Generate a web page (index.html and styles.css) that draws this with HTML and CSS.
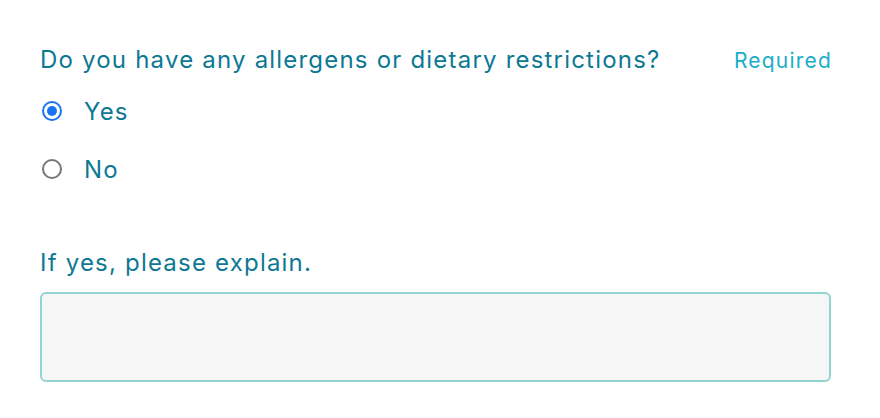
FILE: index.html
```html
<!DOCTYPE html>
<html>
<head>
<meta charset="utf-8">
<link rel="stylesheet" href="styles.css">
</head>
<body>
<form class="form">
  <div class="question">
    <div class="q-head">
      <span class="q-label">Do you have any allergens or dietary restrictions?</span>
      <span class="q-required">Required</span>
    </div>
    <div class="options">
      <label class="option"><span class="radio checked"></span><span class="opt-text">Yes</span></label>
      <label class="option"><span class="radio"></span><span class="opt-text">No</span></label>
    </div>
  </div>
  <div class="question explain">
    <div class="q-label">If yes, please explain.</div>
    <div class="textbox"></div>
  </div>
</form>
</body>
</html>
```
FILE: styles.css
```css
html, body {
  margin: 0;
  padding: 0;
  background: #ffffff;
}
body {
  font-family: Inter, "Open Sans", sans-serif;
  color: #0d7893;
}
.form {
  width: 791px;
  padding: 42px 0 0 40px;
}
.q-head {
  display: flex;
  justify-content: space-between;
  align-items: baseline;
}
.q-label {
  font-size: 24px;
  line-height: 36px;
  letter-spacing: 1.2px;
}
.q-required {
  font-size: 21px;
  letter-spacing: 1.2px;
  margin-right: -1px;
  color: #1aaec6;
}
.options {
  display: flex;
  flex-direction: column;
  gap: 22px;
  padding-top: 15px;
}
.option {
  display: flex;
  align-items: center;
  gap: 22px;
  height: 36px;
  font-size: 24px;
  letter-spacing: 1.2px;
}
.radio {
  width: 20px;
  height: 20px;
  box-sizing: border-box;
  border: 2px solid #767676;
  border-radius: 50%;
  margin-left: 2px;
  position: relative;
}
.radio.checked {
  border-color: #1a73f0;
}
.radio.checked::after {
  content: "";
  position: absolute;
  left: 3px;
  top: 3px;
  width: 10px;
  height: 10px;
  border-radius: 50%;
  background: #1a73f0;
}
.explain {
  margin-top: 58px;
}
.textbox {
  margin-top: 11px;
  height: 86px;
  border: 2px solid #92d5d0;
  border-radius: 6px;
  background: #f6f6f6;
}
```
